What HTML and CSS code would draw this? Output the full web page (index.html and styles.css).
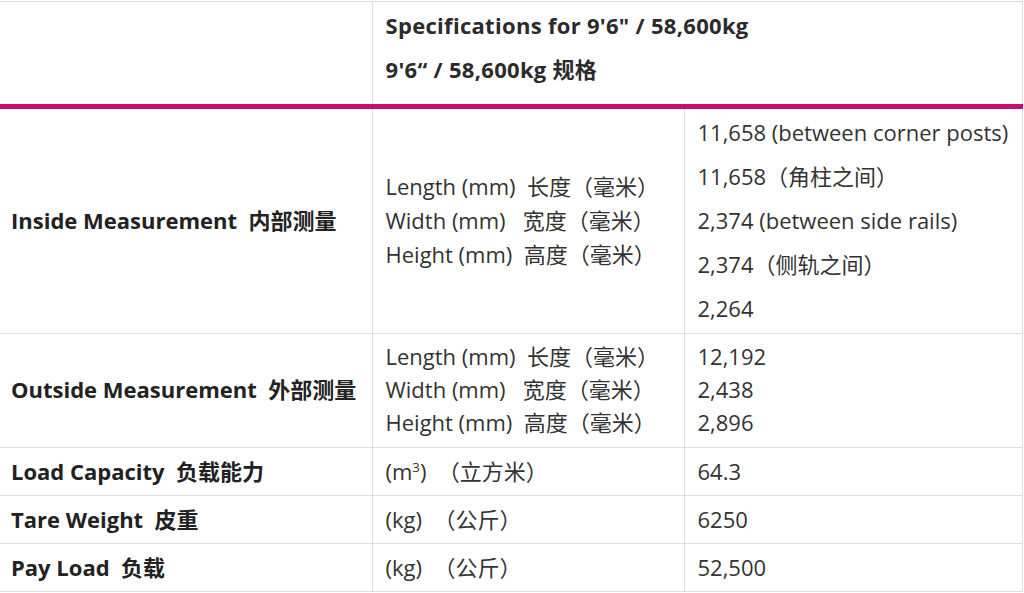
FILE: index.html
```html
<!DOCTYPE html>
<html lang="en">
<head>
<meta charset="utf-8">
<title>Specifications</title>
<link rel="stylesheet" href="styles.css">
</head>
<body>
<table class="spec">
  <colgroup>
    <col class="c1">
    <col class="c2">
    <col class="c3">
  </colgroup>
  <thead>
    <tr>
      <th class="blank"></th>
      <th class="head" colspan="2">
        <p>Specifications for 9'6" / 58,600kg</p>
        <p>9'6“ / 58,600kg 规格</p>
      </th>
    </tr>
  </thead>
  <tbody>
    <tr class="inside">
      <td class="label">Inside Measurement&nbsp; 内部测量</td>
      <td class="units">
        <div>Length (mm)&nbsp; 长度（毫米）</div>
        <div>Width (mm)&nbsp;&nbsp; 宽度（毫米）</div>
        <div>Height (mm)&nbsp; 高度（毫米）</div>
      </td>
      <td class="vals">
        <p>11,658 (between corner posts)</p>
        <p>11,658（角柱之间）</p>
        <p>2,374 (between side rails)</p>
        <p>2,374（侧轨之间）</p>
        <p>2,264</p>
      </td>
    </tr>
    <tr class="outside">
      <td class="label">Outside Measurement&nbsp; 外部测量</td>
      <td class="units">
        <div>Length (mm)&nbsp; 长度（毫米）</div>
        <div>Width (mm)&nbsp;&nbsp; 宽度（毫米）</div>
        <div>Height (mm)&nbsp; 高度（毫米）</div>
      </td>
      <td class="vals">
        <div>12,192</div>
        <div>2,438</div>
        <div>2,896</div>
      </td>
    </tr>
    <tr class="single">
      <td class="label">Load Capacity&nbsp; 负载能力</td>
      <td class="units">(m<sup>3</sup>)&nbsp; （立方米）</td>
      <td class="vals">64.3</td>
    </tr>
    <tr class="single">
      <td class="label">Tare Weight&nbsp; 皮重</td>
      <td class="units">(kg)&nbsp; （公斤）</td>
      <td class="vals">6250</td>
    </tr>
    <tr class="single">
      <td class="label">Pay Load&nbsp; 负载</td>
      <td class="units">(kg)&nbsp; （公斤）</td>
      <td class="vals">52,500</td>
    </tr>
  </tbody>
</table>
</body>
</html>
```
FILE: styles.css
```css
html, body {
  margin: 0;
  padding: 0;
  background: #fff;
}

body {
  padding-top: 1px;
  font-family: "Open Sans", "Noto Sans CJK SC", sans-serif;
  font-size: 22px;
  color: #333;
}

.spec {
  border-collapse: collapse;
  width: 1022px;
  table-layout: fixed;
}

.c1 { width: 372px; }
.c2 { width: 312px; }
.c3 { width: 338px; }

.spec th,
.spec td {
  border: 1px solid #ddd;
  padding: 6px 13px 8px;
  line-height: 34px;
  text-align: left;
  vertical-align: middle;
  white-space: nowrap;
}

.spec th:first-child,
.spec td:first-child {
  border-left: none;
  padding-left: 11px;
}

.spec thead th {
  border-bottom: 5px solid #c3106f;
  font-weight: 700;
  color: #2b2b2b;
  letter-spacing: 0.3px;
  vertical-align: top;
}

.head p {
  margin: 0 0 10px;
}

.label {
  font-weight: 700;
  color: #222;
}

.vals p {
  margin: 0 0 10px;
}

.vals p:last-child {
  margin-bottom: 0;
}

.outside td {
  line-height: 33px;
}

.single td {
  padding-bottom: 7px;
  padding-top: 6px;
}

sup {
  font-size: 0.6em;
  line-height: 0;
  vertical-align: 0.6em;
}
```
